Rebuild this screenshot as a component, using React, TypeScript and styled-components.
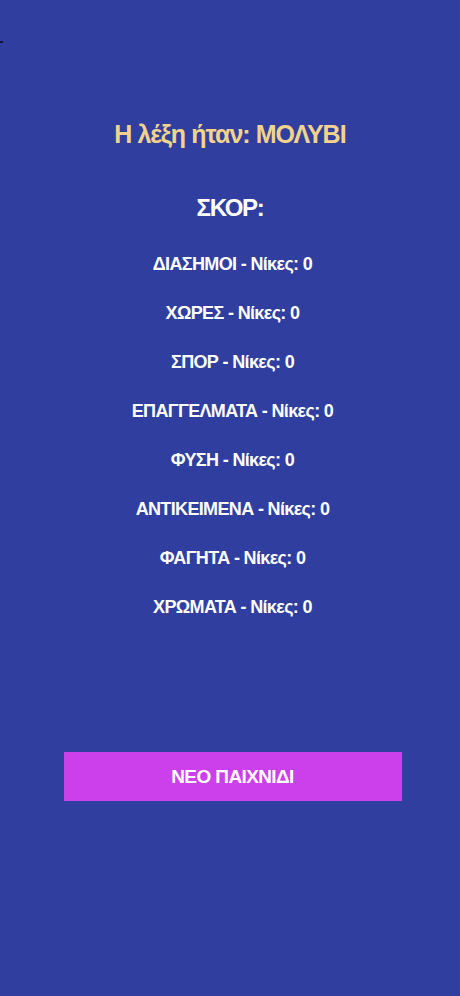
import styled, { createGlobalStyle } from "styled-components";

const GlobalStyle = createGlobalStyle`
    html, body {
        margin: 0;
        padding: 0;
        background-color: #303f9f;
    }
    body {
        font-family: "Liberation Sans", Arial, sans-serif;
    }
`;

const Screen = styled.div`
    position: relative;
    min-height: 996px;
    background-color: #303f9f;
    display: flex;
    flex-direction: column;
    align-items: center;
    padding-top: 119px;
    box-sizing: border-box;
`;

const Cursor = styled.div`
    position: absolute;
    top: 41px;
    left: 0;
    width: 3px;
    height: 2px;
    background-color: #10163a;
`;

const WordTitle = styled.h1`
    margin: 0;
    color: #f2d38c;
    font-size: 25px;
    font-weight: 700;
    letter-spacing: -0.95px;
    line-height: 30px;
`;

const ScoreTitle = styled.h2`
    margin: 44px 0 0;
    color: #ffffff;
    font-size: 24px;
    font-weight: 700;
    letter-spacing: -1.3px;
    line-height: 30px;
`;

const ScoreSection = styled.div`
    display: flex;
    flex-direction: column;
    align-items: center;
    padding-left: 5px;
`;

const ScoreList = styled.ul`
    list-style: none;
    margin: 31px 0 0;
    padding: 0;
    display: flex;
    flex-direction: column;
    align-items: center;
    gap: 29px;
`;

const ScoreRow = styled.li`
    color: #ffffff;
    font-size: 18px;
    font-weight: 700;
    letter-spacing: -0.65px;
    line-height: 20px;
`;

const NewGameButton = styled.button`
    margin-top: 135px;
    width: 338px;
    height: 49px;
    padding: 0;
    border: 0;
    background-color: #cb40ea;
    color: #ffffff;
    font-family: "Liberation Sans", Arial, sans-serif;
    font-size: 19px;
    font-weight: 700;
    letter-spacing: -0.6px;
    cursor: pointer;
`;

const categories = [
    "ΔΙΑΣΗΜΟΙ",
    "ΧΩΡΕΣ",
    "ΣΠΟΡ",
    "ΕΠΑΓΓΕΛΜΑΤΑ",
    "ΦΥΣΗ",
    "ΑΝΤΙΚΕΙΜΕΝΑ",
    "ΦΑΓΗΤΑ",
    "ΧΡΩΜΑΤΑ",
];

export default function App() {
    return (
        <>
            <GlobalStyle />
            <Screen>
                <Cursor />
                <WordTitle>Η λέξη ήταν: ΜΟΛΥΒΙ</WordTitle>
                <ScoreTitle>ΣΚΟΡ:</ScoreTitle>
                <ScoreSection>
                    <ScoreList>
                        {categories.map((name) => (
                            <ScoreRow key={name}>{name} - Νίκες: 0</ScoreRow>
                        ))}
                    </ScoreList>
                    <NewGameButton>ΝΕΟ ΠΑΙΧΝΙΔΙ</NewGameButton>
                </ScoreSection>
            </Screen>
        </>
    );
}
